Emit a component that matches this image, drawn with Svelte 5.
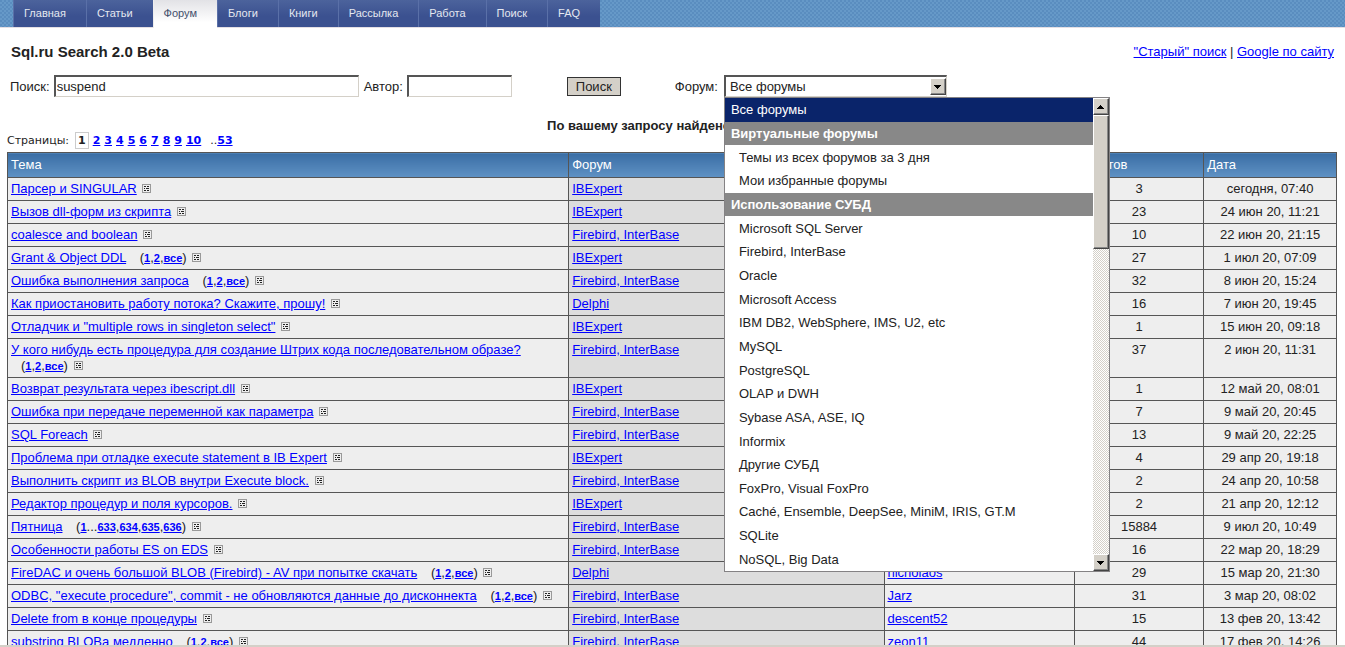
<script lang="ts">
    const tabs = ["Главная", "Статьи", "Форум", "Блоги", "Книги", "Рассылка", "Работа", "Поиск", "FAQ"];
    let query = $state("suspend");
    let author = $state("");
    let forum = $state("Все форумы");
    let isOpen = $state(true);

    const pages = ["2", "3", "4", "5", "6", "7", "8", "9", "10"];

    // kind: "top" - plain item, "group" - heading, "item" - forum inside a group
    const forums = [
        { kind: "top", name: "Все форумы" },
        { kind: "group", name: "Виртуальные форумы" },
        { kind: "item", name: "Темы из всех форумов за 3 дня" },
        { kind: "item", name: "Мои избранные форумы" },
        { kind: "group", name: "Использование СУБД" },
        { kind: "item", name: "Microsoft SQL Server" },
        { kind: "item", name: "Firebird, InterBase" },
        { kind: "item", name: "Oracle" },
        { kind: "item", name: "Microsoft Access" },
        { kind: "item", name: "IBM DB2, WebSphere, IMS, U2, etc" },
        { kind: "item", name: "MySQL" },
        { kind: "item", name: "PostgreSQL" },
        { kind: "item", name: "OLAP и DWH" },
        { kind: "item", name: "Sybase ASA, ASE, IQ" },
        { kind: "item", name: "Informix" },
        { kind: "item", name: "Другие СУБД" },
        { kind: "item", name: "FoxPro, Visual FoxPro" },
        { kind: "item", name: "Caché, Ensemble, DeepSee, MiniM, IRIS, GT.M" },
        { kind: "item", name: "SQLite" },
        { kind: "item", name: "NoSQL, Big Data" },
    ];

    const all = ["1", ",", "2", ",", "все"];
    const topics = [
        { title: "Парсер и SINGULAR", forum: "IBExpert", replies: 3, date: "сегодня, 07:40" },
        { title: "Вызов dll-форм из скрипта", forum: "IBExpert", replies: 23, date: "24 июн 20, 11:21" },
        { title: "coalesce and boolean", forum: "Firebird, InterBase", replies: 10, date: "22 июн 20, 21:15" },
        { title: "Grant & Object DDL", parts: all, forum: "IBExpert", replies: 27, date: "1 июл 20, 07:09" },
        { title: "Ошибка выполнения запроса", parts: all, forum: "Firebird, InterBase", replies: 32, date: "8 июн 20, 15:24" },
        { title: "Как приостановить работу потока? Скажите, прошу!", forum: "Delphi", replies: 16, date: "7 июн 20, 19:45" },
        { title: "Отладчик и \"multiple rows in singleton select\"", forum: "IBExpert", replies: 1, date: "15 июн 20, 09:18" },
        { title: "У кого нибудь есть процедура для создание Штрих кода последовательном образе?", parts: all, forum: "Firebird, InterBase", replies: 37, date: "2 июн 20, 11:31" },
        { title: "Возврат результата через ibescript.dll", forum: "IBExpert", replies: 1, date: "12 май 20, 08:01" },
        { title: "Ошибка при передаче переменной как параметра", forum: "Firebird, InterBase", replies: 7, date: "9 май 20, 20:45" },
        { title: "SQL Foreach", forum: "Firebird, InterBase", replies: 13, date: "9 май 20, 22:25" },
        { title: "Проблема при отладке execute statement в IB Expert", forum: "IBExpert", replies: 4, date: "29 апр 20, 19:18" },
        { title: "Выполнить скрипт из BLOB внутри Execute block.", forum: "Firebird, InterBase", replies: 2, date: "24 апр 20, 10:58" },
        { title: "Редактор процедур и поля курсоров.", forum: "IBExpert", replies: 2, date: "21 апр 20, 12:12" },
        { title: "Пятница", parts: ["1", "...", "633", ",", "634", ",", "635", ",", "636"], forum: "Firebird, InterBase", replies: 15884, date: "9 июл 20, 10:49" },
        { title: "Особенности работы ES on EDS", forum: "Firebird, InterBase", replies: 16, date: "22 мар 20, 18:29" },
        { title: "FireDAC и очень большой BLOB (Firebird) - AV при попытке скачать", parts: all, forum: "Delphi", author: "nicholaos", replies: 29, date: "15 мар 20, 21:30" },
        { title: "ODBC, \"execute procedure\", commit - не обновляются данные до дисконнекта", parts: all, forum: "Firebird, InterBase", author: "Jarz", replies: 31, date: "3 мар 20, 08:02" },
        { title: "Delete from в конце процедуры", forum: "Firebird, InterBase", author: "descent52", replies: 15, date: "13 фев 20, 13:42" },
        { title: "substring BLOBа медленно", parts: all, forum: "Firebird, InterBase", author: "zeon11", replies: 44, date: "17 фев 20, 14:26" },
    ];

    function choose(name: string) {
        forum = name;
        isOpen = false;
    }
</script>

<div class="page">
    <nav>
        {#each tabs as tab}
            <a href="#top" class:active={tab === "Форум"}>{tab}</a>
        {/each}
    </nav>

    <header>
        <h1>Sql.ru Search 2.0 Beta</h1>
        <div><a href="#old">"Старый" поиск</a> | <a href="#google">Google по сайту</a></div>
    </header>

    <form onsubmit={(e) => e.preventDefault()}>
        <label for="query">Поиск:</label>
        <input id="query" class="query" bind:value={query} />
        <label for="author">Автор:</label>
        <input id="author" class="author" bind:value={author} />
        <button type="submit" class="submit">Поиск</button>
        <label for="forum">Форум:</label>
        <div class="combo">
            <select id="forum" bind:value={forum} onmousedown={(e) => { e.preventDefault(); isOpen = !isOpen; }}>
                {#each forums.filter((f) => f.kind !== "group") as f}
                    <option>{f.name}</option>
                {/each}
            </select>
            <span class="arrow"><svg width="7" height="4" shape-rendering="crispEdges"><path d="M0 0h7v1h-1v1h-1v1h-1v1h-1v-1h-1v-1h-1v-1h-1z" /></svg></span>
            {#if isOpen}
                <div class="popup">
                    <div class="options" role="listbox" aria-label="Форум">
                        {#each forums as f}
                            {#if f.kind === "group"}
                                <div class="group">{f.name}</div>
                            {:else}
                                <button type="button" role="option" aria-selected={f.name === forum} class={f.kind} class:selected={f.name === forum} onclick={() => choose(f.name)}>{f.name}</button>
                            {/if}
                        {/each}
                    </div>
                    <div class="scrollbar">
                        <span class="knob"><svg width="7" height="4" shape-rendering="crispEdges"><path d="M3 0h1v1h1v1h1v1h1v1h-7v-1h1v-1h1v-1h1z" /></svg></span>
                        <span class="thumb"></span>
                        <span class="knob bottom"><svg width="7" height="4" shape-rendering="crispEdges"><path d="M0 0h7v1h-1v1h-1v1h-1v1h-1v-1h-1v-1h-1v-1h-1z" /></svg></span>
                    </div>
                </div>
            {/if}
        </div>
    </form>

    <p class="found">По вашему запросу найдено: 1325 тем.</p>

    <div class="pager">
        <span>Страницы:</span>
        <b>1</b>
        {#each pages as page}
            <a href="#{page}">{page}</a>
        {/each}
        <span class="last">..<a href="#53">53</a></span>
    </div>

    <table>
        <thead>
            <tr>
                <th class="topic">Тема</th>
                <th class="forum">Форум</th>
                <th class="user">Автор</th>
                <th class="count">Ответов</th>
                <th class="date">Дата</th>
            </tr>
        </thead>
        <tbody>
            {#each topics as t}
                <tr>
                    <td>
                        <a href="#topic">{t.title}</a>
                        {#if t.parts}
                            <span class="parts">({#each t.parts as p}{#if p === "," || p === "..."}{p}{:else}<a href="#part">{p}</a>{/if}{/each})</span>
                        {/if}
                        <svg class="preview" width="9" height="9" shape-rendering="crispEdges">
                            <path fill="#eee" stroke="#999" d="M.5 .5h8v8h-8z" />
                            <path fill="#222" d="M2 2h2v1h-2zM5 2h2v1h-2zM2 4h1v1h-1zM4 4h3v1h-3zM2 6h2v1h-2zM5 6h2v1h-2z" />
                        </svg>
                    </td>
                    <td class="dark"><a href="#forum">{t.forum}</a></td>
                    <td>{#if t.author}<a href="#user">{t.author}</a>{/if}</td>
                    <td class="center">{t.replies}</td>
                    <td class="center">{t.date}</td>
                </tr>
            {/each}
        </tbody>
    </table>
</div>

<style>
    :global(body) {
        background: #fff;
        color: #222;
        font-family: "Liberation Sans", Arial, sans-serif;
        font-size: 13px;
    }

    .page {
        box-sizing: border-box;
        height: 100vh;
        overflow: hidden;
        border-bottom: 2px solid #d4d0c8;
    }

    a {
        color: #00f;
    }

    nav {
        display: flex;
        height: 27px;
        padding-left: 13px;
        border-bottom: 1px solid #e4dfe4;
        background: repeating-conic-gradient(#6699c8 0 25%, #5a8dbf 0 50%) 0 0 / 4px 4px;
    }

    nav a {
        padding: 0 20px 0 10px;
        border-left: 1px solid #5a70a8;
        background: linear-gradient(#4c639c, #3b5190 60%);
        color: #e4e8f0;
        font-size: 11px;
        line-height: 27px;
        text-decoration: none;
    }

    nav a.active {
        margin-bottom: -1px;
        border-color: #eee;
        background: linear-gradient(#e2e2e6, #fff 80%);
        color: #44506c;
    }

    header {
        display: flex;
        justify-content: space-between;
        align-items: center;
        height: 47px;
        padding: 0 11px;
    }

    h1 {
        margin: 0;
        font-size: 15px;
    }

    form {
        display: flex;
        align-items: center;
        height: 22px;
        padding-left: 10px;
    }

    input,
    select {
        box-sizing: border-box;
        height: 22px;
        border: 2px solid;
        border-color: #555 #d4d0c8 #d4d0c8 #555;
        border-right-width: 1px;
        border-bottom-width: 1px;
        border-radius: 0;
        background: #fff;
        color: #222;
        font: inherit;
        outline: none;
    }

    input {
        margin: 0 5px 0 4px;
        padding: 0 1px;
    }

    .query {
        width: 305px;
    }

    .author {
        width: 105px;
    }

    .submit {
        width: 54px;
        height: 19px;
        margin: 0 54px 0 50px;
        padding: 0;
        border: 1px solid #333;
        background: #d4d0c8;
        color: #222;
        font: inherit;
    }

    .combo {
        position: relative;
        margin-left: 6px;
    }

    select {
        display: block;
        width: 223px;
        padding: 0 20px 0 4px;
        appearance: none;
    }

    .arrow,
    .knob {
        display: flex;
        justify-content: center;
        align-items: center;
        box-sizing: border-box;
        width: 16px;
        height: 17px;
        border: 1px solid;
        border-color: #fff #444 #444 #fff;
        background: #d4d0c8;
        box-shadow: inset -1px -1px #888;
    }

    .arrow {
        position: absolute;
        top: 3px;
        right: 1px;
        pointer-events: none;
    }

    .popup {
        position: absolute;
        top: 22px;
        left: 0;
        z-index: 1;
        display: flex;
        border: 1px solid #848284;
        background: #fff;
    }

    .options {
        display: flex;
        flex-direction: column;
        width: 368px;
        height: 473px;
    }

    .options > * {
        display: flex;
        flex: 1;
        align-items: center;
        padding: 0 6px;
        border: 0;
        background: none;
        color: #222;
        font: inherit;
    }

    .options > .item {
        padding-left: 14px;
    }

    .options > .group {
        background: #888;
        color: #fff;
        font-weight: bold;
    }

    .options > .selected {
        background: #0a246a;
        color: #fff;
    }

    .scrollbar {
        display: flex;
        flex-direction: column;
        width: 16px;
        background: repeating-conic-gradient(#d4d0c8 0 25%, #fff 0 50%) 0 0 / 2px 2px;
    }

    .thumb {
        height: 132px;
        border: 1px solid;
        border-color: #fff #444 #444 #fff;
        background: #d4d0c8;
        box-shadow: inset -1px -1px #888;
    }

    .bottom {
        margin-top: auto;
    }

    .found {
        margin: 21px 0 0;
        font-weight: bold;
        line-height: 15px;
        text-align: center;
    }

    .pager {
        display: flex;
        gap: 4px;
        padding: 0 0 4px 7px;
        font-family: "DejaVu Sans", Verdana, sans-serif;
        font-size: 11px;
        line-height: 15px;
    }

    .pager a {
        font-weight: bold;
    }

    .pager b {
        margin: -1px 0 -1px 2px;
        padding: 0 2px;
        border: 1px solid #ccc;
    }

    .last {
        margin-left: 5px;
    }

    table {
        width: calc(100% - 15px);
        margin-left: 7px;
        border-collapse: collapse;
        table-layout: fixed;
    }

    th,
    td {
        padding: 3px;
        border: 1px solid #555;
        line-height: 16px;
        text-align: left;
        vertical-align: top;
    }

    th {
        padding: 4px 3px;
        background: linear-gradient(#3a6ea5, #5f92c4);
        color: #fff;
        font-weight: normal;
    }

    td {
        background: #eee;
    }

    /* widths are for the content box, cell padding comes on top */
    .topic {
        width: 41.7%;
    }

    .forum {
        width: 23.2%;
    }

    .user {
        width: 13.8%;
    }

    .count {
        width: 9.2%;
    }

    .dark {
        background: #ddd;
    }

    .center {
        text-align: center;
    }

    .parts {
        margin-left: 10px;
        white-space: nowrap;
    }

    .parts a {
        font-size: 11px;
        font-weight: bold;
    }

    .preview {
        margin-left: 2px;
    }
</style>
